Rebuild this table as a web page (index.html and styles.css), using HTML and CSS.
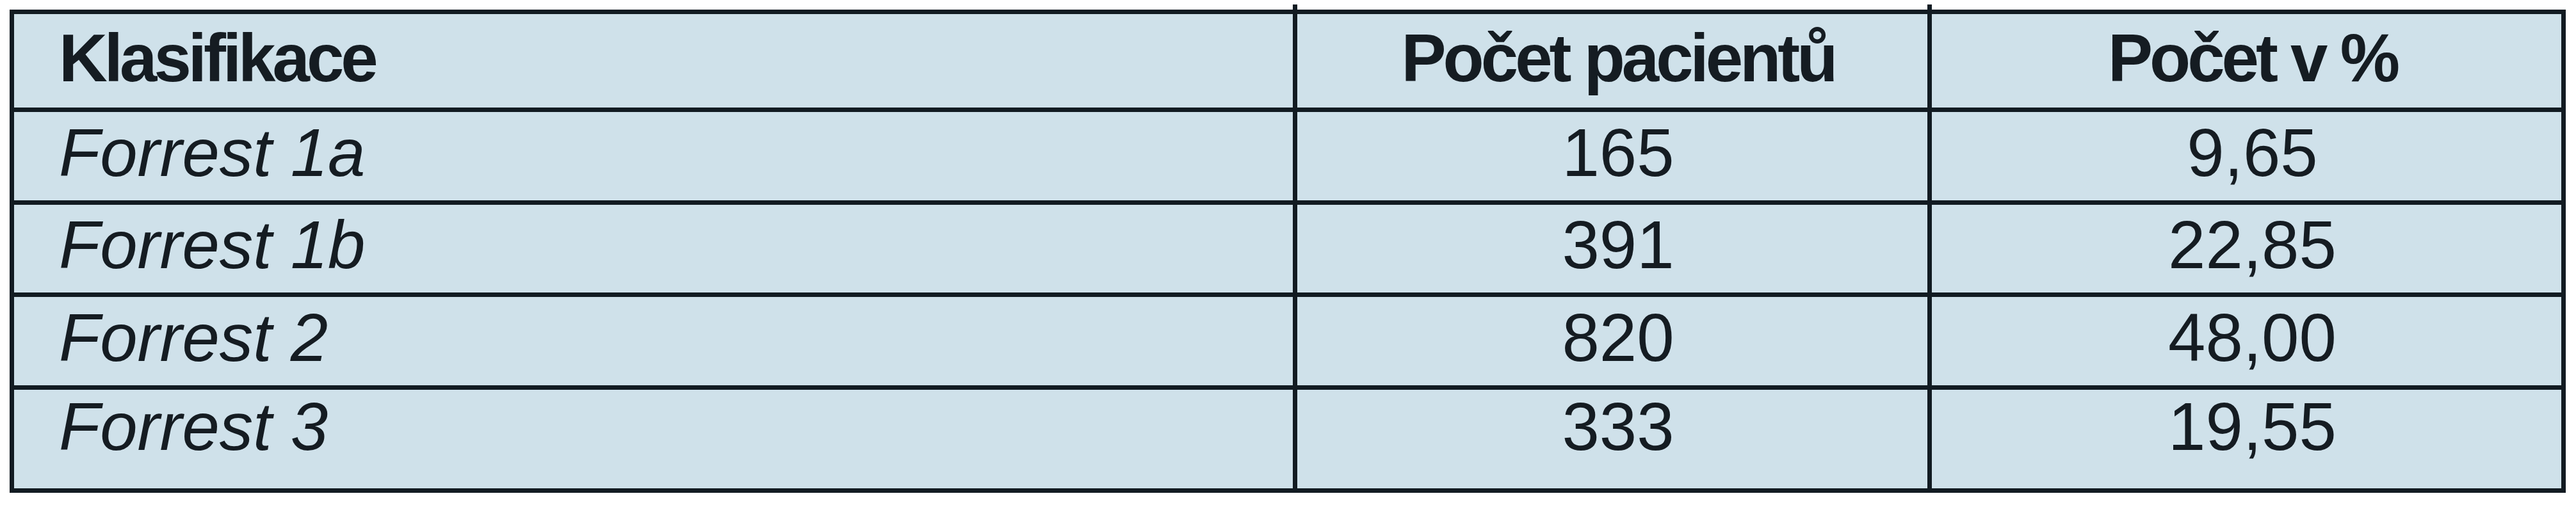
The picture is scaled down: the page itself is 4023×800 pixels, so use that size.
FILE: index.html
```html
<!DOCTYPE html>
<html lang="cs">
<head>
<meta charset="utf-8">
<title>Klasifikace Forrest</title>
<link rel="stylesheet" href="styles.css">
</head>
<body>
<div class="tbl">
  <div class="cell head first">Klasifikace</div>
  <div class="cell head num tick">Počet pacientů</div>
  <div class="cell head num tick">Počet v %</div>

  <div class="cell first it">Forrest 1a</div>
  <div class="cell num">165</div>
  <div class="cell num">9,65</div>

  <div class="cell first it">Forrest 1b</div>
  <div class="cell num">391</div>
  <div class="cell num">22,85</div>

  <div class="cell first it">Forrest 2</div>
  <div class="cell num">820</div>
  <div class="cell num">48,00</div>

  <div class="cell first it last">Forrest 3</div>
  <div class="cell num last">333</div>
  <div class="cell num last">19,55</div>
</div>
</body>
</html>
```
FILE: styles.css
```css
html, body {
  margin: 0;
  padding: 0;
  background: #ffffff;
}

body {
  font-family: "Liberation Sans", Arial, sans-serif;
  color: #151c22;
}

.tbl {
  display: grid;
  grid-template-columns: 1997px 984px 983px;
  grid-template-rows: 146px 138px 137px 138px 154px;
  gap: 7px;
  padding: 7px;
  width: max-content;
  margin: 15px 0 0 15px;
  background: #121b22;
}

.cell {
  background: #cfe1ea;
  display: flex;
  align-items: center;
  font-size: 105px;
  line-height: 1;
  padding-bottom: 12px;
  box-sizing: border-box;
  white-space: nowrap;
}

.first {
  padding-left: 70px;
}

.num {
  justify-content: center;
  padding-left: 18px;
}

.head {
  font-weight: bold;
  letter-spacing: -5px;
  padding-bottom: 9px;
}

.it {
  font-style: italic;
}

.last {
  padding-bottom: 40px;
}

.tick {
  position: relative;
}

.tick::before {
  content: "";
  position: absolute;
  left: -7px;
  top: -15px;
  width: 7px;
  height: 15px;
  background: #121b22;
}
```
